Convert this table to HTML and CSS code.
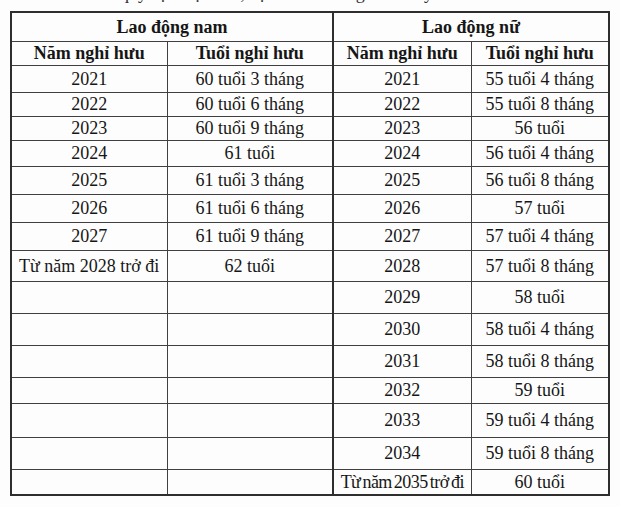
FILE: index.html
```html
<!DOCTYPE html>
<html lang="vi">
<head>
<meta charset="utf-8">
<title>Lộ trình tuổi nghỉ hưu</title>
<link rel="stylesheet" href="styles.css">
</head>
<body>
<div class="page">
  <div class="cut-line"><p class="cut-text">quy định lộ trình, cụ thể như bảng dưới đây:</p></div>
  <table class="retire">
    <colgroup>
      <col class="c1"><col class="c2"><col class="c3"><col class="c4">
    </colgroup>
    <tr class="h-group">
      <th colspan="2" class="mid">Lao động nam</th>
      <th colspan="2">Lao động nữ</th>
    </tr>
    <tr class="h-sub">
      <th>Năm nghỉ hưu</th><th class="mid">Tuổi nghỉ hưu</th>
      <th>Năm nghỉ hưu</th><th>Tuổi nghỉ hưu</th>
    </tr>
    <tr class="r27"><td>2021</td><td class="mid">60 tuổi 3 tháng</td><td>2021</td><td>55 tuổi 4 tháng</td></tr>
    <tr class="r24"><td>2022</td><td class="mid">60 tuổi 6 tháng</td><td>2022</td><td>55 tuổi 8 tháng</td></tr>
    <tr class="r24"><td>2023</td><td class="mid">60 tuổi 9 tháng</td><td>2023</td><td>56 tuổi</td></tr>
    <tr class="r26"><td>2024</td><td class="mid">61 tuổi</td><td>2024</td><td>56 tuổi 4 tháng</td></tr>
    <tr class="r28"><td>2025</td><td class="mid">61 tuổi 3 tháng</td><td>2025</td><td>56 tuổi 8 tháng</td></tr>
    <tr class="r28"><td>2026</td><td class="mid">61 tuổi 6 tháng</td><td>2026</td><td>57 tuổi</td></tr>
    <tr class="r28"><td>2027</td><td class="mid">61 tuổi 9 tháng</td><td>2027</td><td>57 tuổi 4 tháng</td></tr>
    <tr class="r31"><td>Từ năm 2028 trở đi</td><td class="mid">62 tuổi</td><td>2028</td><td>57 tuổi 8 tháng</td></tr>
    <tr class="r32"><td></td><td class="mid"></td><td>2029</td><td>58 tuổi</td></tr>
    <tr class="r32"><td></td><td class="mid"></td><td>2030</td><td>58 tuổi 4 tháng</td></tr>
    <tr class="r32"><td></td><td class="mid"></td><td>2031</td><td>58 tuổi 8 tháng</td></tr>
    <tr class="r26"><td></td><td class="mid"></td><td>2032</td><td>59 tuổi</td></tr>
    <tr class="r34"><td></td><td class="mid"></td><td>2033</td><td>59 tuổi 4 tháng</td></tr>
    <tr class="r32"><td></td><td class="mid"></td><td>2034</td><td>59 tuổi 8 tháng</td></tr>
    <tr class="r26"><td></td><td class="mid"></td><td class="tight">Từ năm 2035 trở đi</td><td>60 tuổi</td></tr>
  </table>
</div>
</body>
</html>
```

FILE: styles.css
```css
html, body {
  margin: 0;
  padding: 0;
  background: #fdfdfd;
}

.page {
  width: 620px;
  height: 507px;
  overflow: hidden;
  padding-left: 10px;
  box-sizing: border-box;
  font-family: "Liberation Serif", serif;
  color: #161616;
}

.cut-line {
  height: 11px;
  overflow: hidden;
}

.cut-text {
  margin: -16px 0 0 110px;
  font-size: 18px;
  line-height: 18px;
  white-space: nowrap;
  color: #333;
}

.retire {
  border-collapse: collapse;
  table-layout: fixed;
  width: 600px;
  border: 2px solid #2e2e2e;
  font-family: "Liberation Serif", serif;
  font-size: 18px;
}

.c1 { width: 156px; }
.c2 { width: 166px; }
.c3 { width: 138px; }
.c4 { width: 138px; }

.retire th,
.retire td {
  border: 1px solid #404040;
  padding: 0;
  text-align: center;
  vertical-align: middle;
  line-height: 20px;
  white-space: nowrap;
  font-family: "Liberation Serif", serif;
  font-weight: normal;
}

.retire th {
  font-weight: bold;
}

.retire .mid {
  border-right: 2px solid #2e2e2e;
}

.h-group { height: 29px; }
.h-sub { height: 24px; }
.r24 { height: 24px; }
.r26 { height: 26px; }
.r27 { height: 27px; }
.r28 { height: 28px; }
.r31 { height: 31px; }
.r32 { height: 32px; }
.r34 { height: 34px; }

.retire .tight {
  letter-spacing: -0.5px;
  word-spacing: -2px;
}
```
